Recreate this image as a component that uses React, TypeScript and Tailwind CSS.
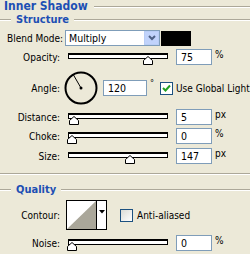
import React from "react";

const Line = () => (
  <div className="flex-1 flex flex-col">
    <div className="h-px bg-[#aca899]" />
    <div className="h-px bg-white" />
  </div>
);

const Thumb = ({ left }: { left: number }) => (
  <svg
    width="10"
    height="9"
    viewBox="0 0 10 9"
    className="absolute top-[7px]"
    style={{ left }}
  >
    <path d="M0.5 8.5 L0.5 4.5 L5 0.5 L9.5 4.5 L9.5 8.5 Z" fill="#fff" stroke="#000" />
  </svg>
);

const Slider = ({ pos }: { pos: number }) => (
  <div className="relative w-[100px] h-[16px] ml-[7px] shrink-0">
    <div className="absolute left-0 right-0 top-[4px] h-[6px] border-t-2 border-b border-l border-r border-black bg-white" />
    <Thumb left={pos} />
  </div>
);

const Input = ({ value, w = 36 }: { value: string; w?: number }) => (
  <div
    className="h-[16px] shrink-0 bg-white border border-[#7f9db9] pl-[4px] leading-[14px] text-[10.5px]"
    style={{ width: w }}
  >
    {value}
  </div>
);

const Label = ({ children }: { children: React.ReactNode }) => (
  <div className="w-[61px] shrink-0 text-right pr-[1px] whitespace-nowrap">{children}</div>
);

const SliderRow = ({
  label,
  pos,
  value,
  unit,
  className,
}: {
  label: string;
  pos: number;
  value: string;
  unit: string;
  className?: string;
}) => (
  <div className={"flex items-center h-[16px] " + (className ?? "")}>
    <Label>{label}</Label>
    <Slider pos={pos} />
    <div className="ml-[8px] shrink-0">
      <Input value={value} />
    </div>
    <div className="ml-[3px] whitespace-nowrap self-start leading-[12px]">{unit}</div>
  </div>
);

export default function App() {
  return (
    <div
      className="w-[250px] h-[254px] bg-[#ece9d8] overflow-hidden text-black text-[10px]"
      style={{ fontFamily: "'DejaVu Sans Condensed', 'DejaVu Sans', sans-serif" }}
    >
      {/* Inner Shadow header */}
      <div className="flex items-center h-[13px] pl-[4px]">
        <div className="text-[12px] font-bold text-[#1d4fb4] leading-[13px] pr-[6px] whitespace-nowrap">Inner Shadow</div>
        <Line />
      </div>
      {/* Structure title */}
      <div className="flex items-center h-[14px]">
        <div className="w-[11px] flex flex-col">
          <div className="h-px bg-[#aca899]" />
          <div className="h-px bg-white" />
        </div>
        <div className="text-[11px] font-bold text-[#1d4fb4] leading-[14px] px-[5px] whitespace-nowrap">Structure</div>
        <Line />
      </div>

      {/* Blend mode */}
      <div className="flex items-center h-[16px] mt-[3px]">
        <div className="w-[62px] shrink-0 pl-[7px] whitespace-nowrap">Blend Mode:</div>
        <div className="ml-[3px] w-[95px] shrink-0 h-[16px] bg-white border border-[#7f9db9] flex items-center">
          <div className="flex-1 pl-[3px] leading-[14px] text-[10.5px]">Multiply</div>
          <div className="w-[15px] h-[14px] bg-[#c1d3fb] border border-[#b9cdf5] flex items-center justify-center">
            <svg width="8" height="6" viewBox="0 0 8 6">
              <path d="M1 1 L4 4 L7 1" fill="none" stroke="#4d6185" strokeWidth="2" />
            </svg>
          </div>
        </div>
        <div className="ml-[1px] w-[30px] h-[15px] bg-black shrink-0" />
      </div>

      <SliderRow label="Opacity:" pos={75} value="75" unit="%" className="mt-[3px]" />

      {/* Angle */}
      <div className="flex items-center h-[34px] mt-[6px]">
        <Label>Angle:</Label>
        <svg width="34" height="34" viewBox="0 0 34 34" className="ml-[3px] shrink-0">
          <circle cx="17" cy="17" r="15.5" fill="none" stroke="#000" strokeWidth="2" />
          <line x1="17" y1="17" x2="9.5" y2="4" stroke="#000" strokeWidth="1" />
          <circle cx="17" cy="17" r="1.5" fill="#000" />
        </svg>
        <div className="ml-[5px] shrink-0">
          <Input value="120" w={44} />
        </div>
        <div className="ml-[3px] self-start mt-[8px] text-[9px] leading-[9px] w-[5px] shrink-0">°</div>
        <div className="ml-[5px] shrink-0 w-[13px] h-[13px] bg-white border border-[#1c5180] flex items-center justify-center">
          <svg width="9" height="9" viewBox="0 0 9 9">
            <path d="M1 4 L3.5 6.5 L8 1.5" fill="none" stroke="#21a121" strokeWidth="2" />
          </svg>
        </div>
        <div className="ml-[3px] whitespace-nowrap">Use Global Light</div>
      </div>

      <SliderRow label="Distance:" pos={1} value="5" unit="px" className="mt-[4px]" />
      <SliderRow label="Choke:" pos={-1} value="0" unit="%" className="mt-[3px]" />
      <SliderRow label="Size:" pos={57} value="147" unit="px" className="mt-[4px]" />

      {/* bottom border of Structure */}
      <div className="mt-[9px] flex flex-col">
        <div className="h-px bg-[#aca899]" />
        <div className="h-px bg-white" />
      </div>

      {/* Quality title */}
      <div className="flex items-center h-[14px] mt-[8px]">
        <div className="w-[11px] flex flex-col">
          <div className="h-px bg-[#aca899]" />
          <div className="h-px bg-white" />
        </div>
        <div className="text-[11px] font-bold text-[#1d4fb4] leading-[14px] px-[5px] whitespace-nowrap">Quality</div>
        <Line />
      </div>

      {/* Contour */}
      <div className="flex items-center h-[30px] mt-[3px]">
        <Label>Contour:</Label>
        <div className="ml-[5px] shrink-0 w-[41px] h-[30px] border border-black flex bg-white">
          <svg width="29" height="28" viewBox="0 0 29 28">
            <path d="M0 28 L29 0 L29 28 Z" fill="#aaa79a" />
          </svg>
          <div className="flex-1 border-l border-black flex items-start justify-center pt-[9px]">
            <svg width="6" height="4" viewBox="0 0 6 4">
              <path d="M0 0 L6 0 L3 3.5 Z" fill="#000" />
            </svg>
          </div>
        </div>
        <div className="ml-[13px] shrink-0 w-[13px] h-[13px] border border-[#1c5180] bg-gradient-to-br from-[#dcdcd6] to-white" />
        <div className="ml-[4px] whitespace-nowrap">Anti-aliased</div>
      </div>

      <SliderRow label="Noise:" pos={-1} value="0" unit="%" className="mt-[5px]" />
    </div>
  );
}
